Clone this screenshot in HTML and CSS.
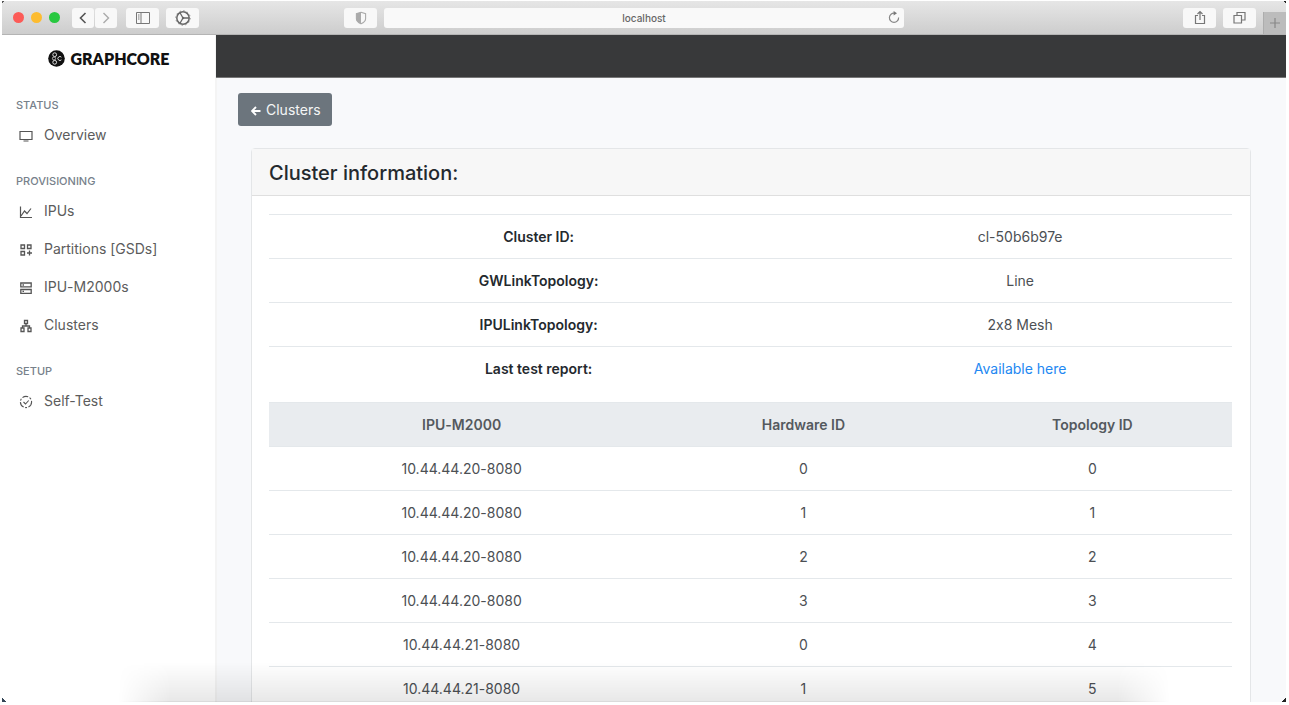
FILE: index.html
```
<!DOCTYPE html>
<html lang="en">
<head>
    <meta charset="UTF-8">
    <meta name="viewport" content="width=device-width, initial-scale=1.0">
    <title>Graphcore - Clusters</title>
    <link rel="stylesheet" href="styles.css">
</head>
<body>
<div class="window">

    <!-- browser toolbar -->
    <header class="toolbar">
        <div class="toolbar-left">
            <span class="lights"><i class="light red"></i><i class="light yellow"></i><i class="light green"></i></span>
            <span class="history">
                <button class="tool narrow" aria-label="Back"><svg width="12" height="14" viewBox="0 0 12 14"><path d="M8.5 2 3.5 7l5 5" stroke="#555" stroke-width="1.6"/></svg></button>
                <button class="tool narrow" aria-label="Forward"><svg width="12" height="14" viewBox="0 0 12 14"><path d="M3.5 2l5 5-5 5" stroke="#aaa" stroke-width="1.4"/></svg></button>
            </span>
            <button class="tool" aria-label="Sidebar"><svg width="14" height="12" viewBox="0 0 14 12"><path d="M.5.5h13v11H.5zM5 .5v11M2 3h1.5M2 5h1.5M2 7h1.5" stroke="#777"/></svg></button>
            <button class="tool" aria-label="Extension"><svg width="16" height="16" viewBox="0 0 16 16"><circle cx="8" cy="8" r="6.2" stroke="#666" stroke-width="1.5"/><circle cx="8" cy="8" r="7.2" stroke="#888" stroke-dasharray="1.5 2.27"/><path d="M8 8h6M8 8 5 2.800M8 8 5 13.200" stroke="#666" stroke-width="1.300"/><circle cx="8" cy="8" r="1.200" fill="#666"/></svg></button>
            <button class="tool shield" aria-label="Privacy report"><svg width="12" height="14" viewBox="0 0 12 14"><path d="M6 1.2 10.6 2.6v5.2c0 2.4-2.2 4-4.6 5-2.4-1-4.6-2.6-4.6-5V2.6z" stroke="#aaa" stroke-width="1.1"/><path d="M6 1.2v11.6c-2.4-1-4.6-2.6-4.6-5V2.6z" fill="#aaa"/></svg></button>
        </div>
        <div class="address">
            <input type="text" value="localhost" aria-label="Address">
            <button class="reload" aria-label="Reload"><svg width="12" height="13" viewBox="0 0 12 13"><path d="M10.6 6.5A4.6 4.6 0 1 1 6.5 2.2" stroke="#888" stroke-width="1.2"/><path d="M5.6 0 9 2.3 5.6 4.6z" fill="#777"/></svg></button>
        </div>
        <div class="toolbar-right">
            <button class="tool" aria-label="Share"><svg width="12" height="15" viewBox="0 0 12 15"><path d="M4 5.5H1.5v8h9v-8H8M6 10V1.5M3.5 4 6 1.5 8.5 4" stroke="#777" stroke-width="1.2"/></svg></button>
            <button class="tool" aria-label="Tabs"><svg width="13" height="13" viewBox="0 0 13 13"><path d="M1 4.5h7.5V12H1zM4 4V1.5h8V9H9" stroke="#777" stroke-width="1.2"/></svg></button>
            <button class="new-tab" aria-label="New tab"><svg width="12" height="12" viewBox="0 0 12 12"><path d="M6 1v10M1 6h10" stroke="#888" stroke-width="1.2"/></svg></button>
        </div>
    </header>

    <div class="app">
        <nav class="sidebar">
            <a class="brand" href="#">
                <svg width="17" height="17" viewBox="0 0 17 17"><circle cx="8.5" cy="8.5" r="8.3" fill="#111"/><circle cx="6.7" cy="4.7" r="1.9" stroke="#ddd"/><circle cx="6" cy="8.5" r="1.6" stroke="#bbb"/><circle cx="6.7" cy="12.3" r="1.9" stroke="#ddd"/><path d="M13.4 7.2a2 2 0 1 0 0 2.6" stroke="#ddd"/></svg>
                <span>GRAPHCORE</span>
            </a>

            <h6>STATUS</h6>
            <a class="nav-link" href="#">
                <svg width="14" height="14" viewBox="0 0 14 14"><path d="M1 2.5h12v8H1zM4.5 12h5" stroke="#555" stroke-width="1.2"/></svg>Overview
            </a>

            <h6>PROVISIONING</h6>
            <a class="nav-link" href="#">
                <svg width="14" height="14" viewBox="0 0 14 14"><path d="M1.5 1.5v11H13M2 11l3.500-5 2.500 2.500L12 3.500" stroke="#555" stroke-width="1.2"/></svg>IPUs
            </a>
            <a class="nav-link" href="#">
                <svg width="14" height="14" viewBox="0 0 14 14"><path d="M2 2h3.500v3.500H2zM8.500 2H12v3.500H8.500zM2 8.500h3.500V12H2zM8 10h5M10.500 7.500v5" stroke="#555" stroke-width="1.3"/></svg>Partitions [GSDs]
            </a>
            <a class="nav-link" href="#">
                <svg width="14" height="14" viewBox="0 0 14 14"><path d="M1.800 2h10.400v3.800H1.800zM1.800 8.500h10.400v3.800H1.800zM3.500 4h1.500M3.500 10.400h1.500" stroke="#555" stroke-width="1.3"/></svg>IPU-M2000s
            </a>
            <a class="nav-link" href="#">
                <svg width="14" height="14" viewBox="0 0 14 14"><path d="M5.500 1.500h3v3h-3zM7 4.500v2.500M3.500 9V7h7v2M2 9h3v3.500H2zM9 9h3v3.500H9z" stroke="#555" stroke-width="1.3"/></svg>Clusters
            </a>

            <h6>SETUP</h6>
            <a class="nav-link" href="#">
                <svg width="14" height="14" viewBox="0 0 14 14"><circle cx="7" cy="7" r="5.6" stroke="#555" stroke-width="1.1" stroke-dasharray="6 1.5 2 1.5"/><path d="M4.500 7l2 2 3.200-3.500" stroke="#555" stroke-width="1.1"/></svg>Self-Test
            </a>
        </nav>

        <div class="page">
            <div class="topbar"></div>
            <main>
                <button class="btn-back"><svg width="10" height="10" viewBox="0 0 10 10"><path d="M9.500 5H1.500M5 1 1 5l4 4" stroke="#fff" stroke-width="1.9"/></svg>Clusters</button>

                <section class="card">
                    <h1>Cluster information:</h1>
                    <div class="card-body">
                        <table class="info">
                            <tr><th scope="row">Cluster ID:</th><td>cl-50b6b97e</td></tr>
                            <tr><th scope="row">GWLinkTopology:</th><td>Line</td></tr>
                            <tr><th scope="row">IPULinkTopology:</th><td>2x8 Mesh</td></tr>
                            <tr><th scope="row">Last test report:</th><td><a href="#">Available here</a></td></tr>
                        </table>
                        <table class="machines">
                            <thead>
                                <tr><th>IPU-M2000</th><th>Hardware ID</th><th>Topology ID</th></tr>
                            </thead>
                            <tbody>
                                <tr><td>10.44.44.20-8080</td><td>0</td><td>0</td></tr>
                                <tr><td>10.44.44.20-8080</td><td>1</td><td>1</td></tr>
                                <tr><td>10.44.44.20-8080</td><td>2</td><td>2</td></tr>
                                <tr><td>10.44.44.20-8080</td><td>3</td><td>3</td></tr>
                                <tr><td>10.44.44.21-8080</td><td>0</td><td>4</td></tr>
                                <tr><td>10.44.44.21-8080</td><td>1</td><td>5</td></tr>
                            </tbody>
                        </table>
                    </div>
                </section>
            </main>
        </div>
    </div>

    <div class="bottom-shade"></div>
    <div class="corners"></div>
</div>
</body>
</html>
```
FILE: styles.css
```
* {
    box-sizing: border-box;
}

body {
    margin: 0;
    padding: 1px 3px 3px 2px;
    height: 100vh;
    background-color: #fff;
    font-family: Inter, "Liberation Sans", sans-serif;
    font-size: 14px;
    font-feature-settings: "calt" 0;
    color: #4c5054;
    overflow: hidden;
}

svg {
    fill: none;
    flex: none;
}

button {
    font-family: inherit;
    border: 0;
    padding: 0;
    display: flex;
    align-items: center;
    justify-content: center;
}

a {
    text-decoration: none;
}

.window {
    position: relative;
    height: 100%;
    display: flex;
    flex-direction: column;
    overflow: hidden;
}

/* toolbar */
.toolbar {
    flex: none;
    height: 34px;
    display: grid;
    grid-template-columns: 1fr 520px 1fr;
    gap: 7px;
    align-items: center;
    background: linear-gradient(#e6e6e6, #cdcdcd);
    border-bottom: 1px solid #b4b4b4;
}

.toolbar-left,
.toolbar-right,
.lights,
.history {
    display: flex;
    align-items: center;
}

.toolbar-left {
    gap: 7px;
    padding-left: 11px;
}

.lights {
    gap: 7px;
    margin-right: 5px;
}

.light {
    width: 11px;
    height: 11px;
    border-radius: 50%;
}

.red { background-color: #fc5b57; }
.yellow { background-color: #fdbc30; }
.green { background-color: #28c840; }

.history {
    gap: 1px;
    margin-right: 2px;
}

.tool {
    width: 33px;
    height: 20px;
    background-color: #f8f8f8;
    border-radius: 3px;
}

.narrow {
    width: 22px;
}

.shield {
    margin-left: auto;
}

.address {
    position: relative;
}

.address input {
    display: block;
    width: 100%;
    height: 20px;
    border: 0;
    border-radius: 3px;
    background-color: #f9f9f9;
    font: 500 10px Inter, sans-serif;
    color: #666;
    text-align: center;
}

.reload {
    position: absolute;
    right: 4px;
    top: 3px;
    background: none;
}

.toolbar-right {
    height: 100%;
    gap: 7px;
    justify-content: flex-end;
}

.new-tab {
    align-self: flex-end;
    width: 23px;
    height: 22px;
    background-color: #bcbcbc;
    border-left: 1px solid #adadad;
}

/* layout */
.app {
    flex: 1;
    min-height: 0;
    display: flex;
}

.sidebar {
    flex: none;
    width: 215px;
    border-right: 2px solid #f4f4f4;
}

.brand {
    height: 42px;
    padding-top: 4px;
    display: flex;
    align-items: center;
    justify-content: center;
    gap: 6px;
    color: #111;
    font: 800 16px Lato, sans-serif;
}

.sidebar h6 {
    margin: 16px 0 0;
    padding-left: 14px;
    font-size: 11px;
    line-height: 22px;
    font-weight: 500;
    color: #77818b;
}

.brand + h6 {
    margin-top: 17px;
}

.nav-link {
    display: flex;
    align-items: center;
    gap: 11px;
    height: 38px;
    padding: 0 0 2px 17px;
    color: #5c5c5c;
}

.nav-link svg {
    margin-top: 4px;
}

.page {
    flex: 1;
    min-width: 0;
    background-color: #f8f9fb;
}

.topbar {
    height: 43px;
    background-color: #38393a;
    border-bottom: 1px solid #777;
    margin-left: -1px;
}

main {
    padding: 15px 22px 0 21px;
}

.btn-back {
    height: 33px;
    padding: 0 11px 0 13px;
    gap: 5px;
    background-color: #6c757d;
    color: #f4f5f6;
    border-radius: 3px;
    font-size: 14px;
}

.btn-back svg {
    margin-top: 3px;
}

/* card */
.card {
    margin: 22px 13px 0;
    border: 1px solid #e4e6e8;
    border-radius: 4px;
    background-color: #fff;
}

.card h1 {
    margin: 0;
    padding: 12px 17px 9px;
    background-color: #f7f7f7;
    border-bottom: 1px solid #dfdfdf;
    font-size: 20px;
    line-height: 25px;
    font-weight: 500;
    color: #24292e;
}

.card-body {
    padding: 18px 18px 18px 17px;
}

table {
    width: 100%;
    table-layout: fixed;
    border-collapse: separate;
    border-spacing: 0;
    text-align: center;
}

th,
td {
    height: 44px;
    padding: 0;
    border-top: 1px solid #e4e8eb;
}

.info {
    margin-bottom: 12px;
}

.info th {
    width: 56%;
    font-weight: 600;
    color: #24292e;
}

.info a {
    color: #2388f2;
}

.machines th {
    background-color: #e9ecef;
    font-weight: 600;
    color: #54595e;
}

.machines th:first-child {
    width: 40%;
}

.machines th:nth-child(2) {
    width: 31%;
}

/* soft shadow along the lower edge of the window */
.bottom-shade {
    position: absolute;
    left: 9%;
    right: 9%;
    bottom: 0;
    height: 40px;
    background: linear-gradient(transparent, rgba(0, 0, 0, 0.09));
    border-bottom: 1px solid rgba(0, 0, 0, 0.14);
    -webkit-mask-image: linear-gradient(90deg, transparent, #000 5%, #000 95%, transparent);
    mask-image: linear-gradient(90deg, transparent, #000 5%, #000 95%, transparent);
    pointer-events: none;
}

.corners {
    position: absolute;
    inset: 0;
    pointer-events: none;
    background:
        linear-gradient(135deg, #555 50%, transparent 50%) left top / 3px 3px no-repeat,
        linear-gradient(225deg, #222 50%, transparent 50%) right top / 3px 3px no-repeat,
        linear-gradient(45deg, #345 50%, transparent 50%) left bottom / 4px 4px no-repeat,
        linear-gradient(315deg, #222 50%, transparent 50%) right bottom / 4px 4px no-repeat;
}
```
